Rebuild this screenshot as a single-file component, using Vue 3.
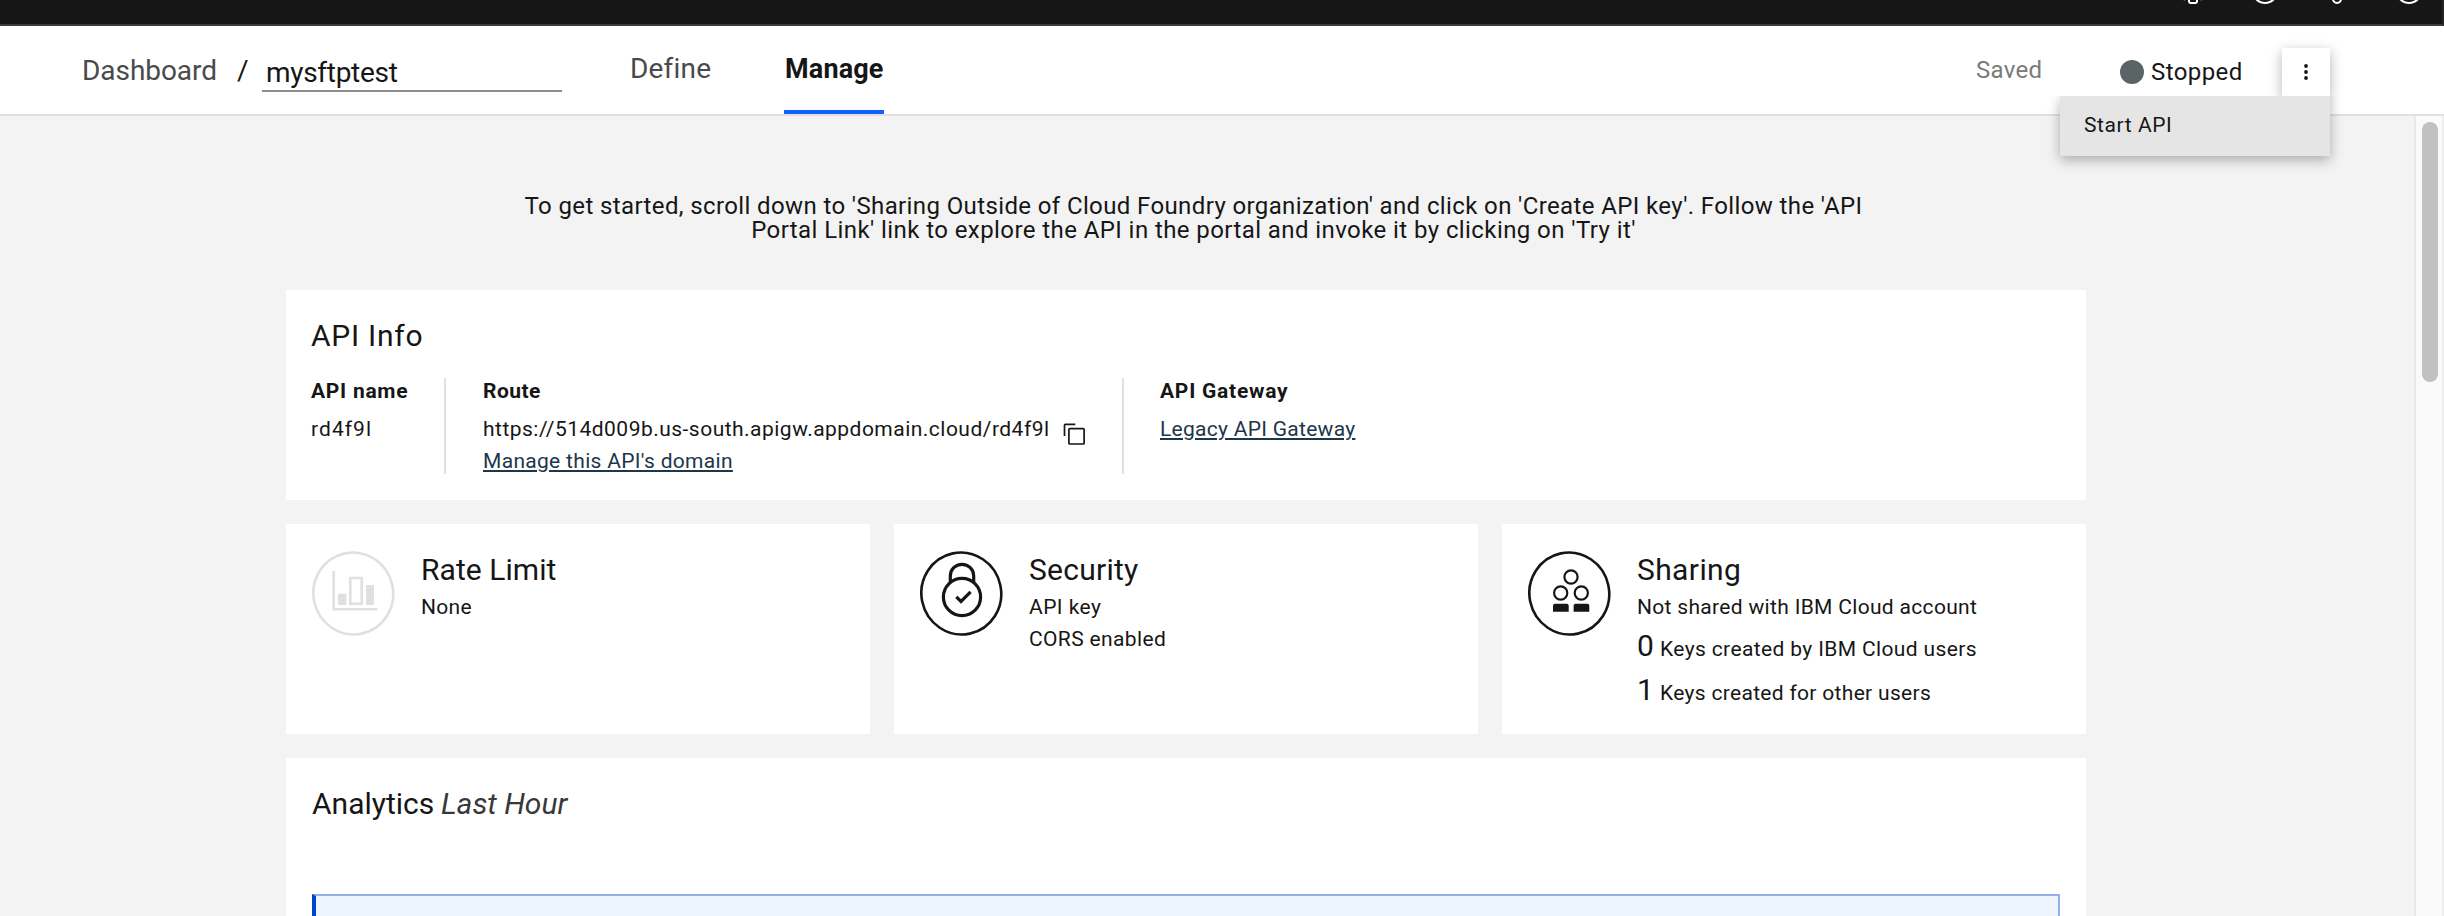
<script setup>
const statusLabel = 'Stopped'
const apiName = 'mysftptest'
const routeUrl = 'https://514d009b.us-south.apigw.appdomain.cloud/rd4f9l'
</script>

<template>
  <div class="page">
    <div class="topbar">
      <svg class="topbar-icons" width="240" height="6" viewBox="0 0 240 6">
        <path d="M9 -2V1.6Q9 3 10.4 3H15.6Q17 3 17 1.6V-2" />
        <path class="faint" d="M3.6 0.3H5.4M20.6 0.3H22.4" />
        <circle cx="85" cy="-9" r="12" />
        <circle cx="157" cy="-1" r="4" />
        <circle cx="229" cy="-9" r="12" />
      </svg>
    </div>

    <header class="header">
      <a class="crumb">Dashboard</a>
      <span class="slash">/</span>
      <div class="name-field">{{ apiName }}</div>
      <nav class="tabs">
        <a class="tab define">Define</a>
        <a class="tab active">Manage</a>
      </nav>
      <span class="saved">Saved</span>
      <div class="status"><i class="dot"></i><span>{{ statusLabel }}</span></div>
      <div class="overflow">
        <button class="overflow-btn" aria-label="Actions">
          <svg width="6" height="18" viewBox="0 0 6 18">
            <circle cx="3" cy="3" r="1.9" /><circle cx="3" cy="9" r="1.9" /><circle cx="3" cy="15" r="1.9" />
          </svg>
        </button>
        <div class="menu">Start API</div>
      </div>
    </header>

    <div class="body">
      <main class="content">
        <p class="intro">
          <span class="intro-a">To get started, scroll down to 'Sharing Outside of Cloud Foundry organization' and click on 'Create API key'. Follow the 'API</span>
          <span class="intro-b">Portal Link' link to explore the API in the portal and invoke it by clicking on 'Try it'</span>
        </p>

        <section class="card info">
          <h2 class="t-info">API Info</h2>
          <div class="cols">
            <div class="col c1">
              <h3 class="t-name">API name</h3>
              <div class="line t-id">rd4f9l</div>
            </div>
            <div class="col c2">
              <h3 class="t-route">Route</h3>
              <div class="line url-row">
                <span class="t-url">{{ routeUrl }}</span>
                <svg class="copy" width="24" height="24" viewBox="0 0 24 24">
                  <path d="M2.5 14V3.2Q2.5 2.4 3.3 2.4H13.3" />
                  <rect x="6.9" y="6.6" width="15.2" height="15.4" rx="0.8" />
                </svg>
              </div>
              <div class="line"><a class="link t-domain">Manage this API's domain</a></div>
            </div>
            <div class="col c3">
              <h3 class="t-gw">API Gateway</h3>
              <div class="line"><a class="link t-legacy">Legacy API Gateway</a></div>
            </div>
          </div>
        </section>

        <div class="features">
          <section class="card feature">
            <svg class="glyph muted" width="84" height="86" viewBox="0 0 84 86">
              <ellipse cx="41.3" cy="42.5" rx="39.9" ry="41" transform="rotate(-12 41.3 42.5)" />
              <path d="M21.7 20V58.3H65.3" />
              <rect class="solid" x="26" y="42.7" width="8.3" height="11.3" />
              <rect x="38.3" y="27" width="11.4" height="25.7" />
              <rect class="solid" x="54" y="34" width="8" height="20" />
            </svg>
            <div>
              <h2 class="t-rate">Rate Limit</h2>
              <div class="line t-none">None</div>
            </div>
          </section>

          <section class="card feature">
            <svg class="glyph" width="84" height="86" viewBox="0 0 84 86">
              <ellipse cx="41.3" cy="42.5" rx="39.9" ry="41" transform="rotate(-12 41.3 42.5)" />
              <circle class="heavy" cx="42" cy="46" r="18.6" />
              <path class="heavy" d="M30.3 32V25A11.7 11.7 0 0 1 53.7 25V32" />
              <path class="heavy" d="M36.3 45.8L41 50.4L50.6 40.8" />
            </svg>
            <div>
              <h2 class="t-sec">Security</h2>
              <div class="line t-key">API key</div>
              <div class="line t-cors">CORS enabled</div>
            </div>
          </section>

          <section class="card feature">
            <svg class="glyph" width="84" height="86" viewBox="0 0 84 86">
              <ellipse cx="41.3" cy="42.5" rx="39.9" ry="41" transform="rotate(-12 41.3 42.5)" />
              <g class="heads">
                <circle cx="43" cy="26" r="6.6" />
                <circle cx="32.7" cy="42" r="6.6" />
                <circle cx="53.3" cy="42" r="6.6" />
              </g>
              <path class="solid" d="M25 60.7V54.7Q25 52.7 27 52.7H38.7Q40.7 52.7 40.7 54.7V60.7Z" />
              <path class="solid" d="M45.6 60.7V54.7Q45.6 52.7 47.6 52.7H59.3Q61.3 52.7 61.3 54.7V60.7Z" />
            </svg>
            <div>
              <h2 class="t-share">Sharing</h2>
              <div class="line t-not">Not shared with IBM Cloud account</div>
              <div class="count first"><b>0</b><span class="t-by">Keys created by IBM Cloud users</span></div>
              <div class="count"><b>1</b><span class="t-for">Keys created for other users</span></div>
            </div>
          </section>
        </div>

        <section class="card analytics">
          <h2><span class="t-an">Analytics</span><em>Last Hour</em></h2>
          <div class="notice"></div>
        </section>
      </main>

      <div class="scrollbar"><div class="thumb"></div></div>
    </div>
  </div>
</template>

<style>
body { margin: 0; overflow: hidden; }
</style>

<style scoped>
.page {
  width: 2444px;
  height: 916px;
  overflow: hidden;
  display: flex;
  flex-direction: column;
  background: #f3f3f3;
  color: #161616;
  font-family: Roboto, "Liberation Sans", sans-serif;
  font-size: 21px;
}
h2, h3, p { margin: 0; font-weight: 400; }
.topbar {
  flex: none;
  box-sizing: border-box;
  height: 26px;
  background: #161616;
  border-bottom: 2px solid #393939;
  border-right: 2px solid #262626;
  display: flex;
  justify-content: flex-end;
  padding-right: 22px;
}
.topbar-icons { display: block; fill: none; stroke: #fff; stroke-width: 2; }
.topbar-icons .faint { stroke: #5a5a5a; stroke-width: 1; }

.header {
  flex: none;
  box-sizing: border-box;
  height: 90px;
  background: #fff;
  border-bottom: 2px solid #e0e0e0;
  display: flex;
  align-items: flex-start;
  padding-left: 82px;
  white-space: nowrap;
  font-size: 28px;
  position: relative;
  z-index: 2;
}
.crumb { width: 155px; margin-top: 17px; line-height: 56px; color: #4a4a4a; letter-spacing: -0.05px; }
.slash { width: 25px; margin-top: 17px; line-height: 56px; }
.name-field {
  box-sizing: border-box;
  width: 300px;
  height: 38px;
  margin-top: 28px;
  padding-left: 4px;
  line-height: 37px;
  border-bottom: 2px solid #8d8d8d;
  letter-spacing: -0.3px;
}
.tabs { display: flex; margin-left: 68px; }
.tab {
  box-sizing: border-box;
  height: 88px;
  padding-top: 1px;
  line-height: 84px;
}
.define { width: 154px; color: #4a4a4a; letter-spacing: 0.2px; }
.active {
  width: 100px;
  padding-left: 1px;
  font-weight: 700;
  font-size: 27px;
  letter-spacing: 0.15px;
  border-bottom: 4px solid #0f62fe;
}
.saved { width: 144px; margin-left: auto; margin-top: 16px; line-height: 56px; font-size: 24px; color: #7a7a7a; letter-spacing: 0.29px; }
.status {
  width: 162px;
  height: 56px;
  margin-top: 18px;
  display: flex;
  align-items: center;
  gap: 7px;
  font-size: 24px;
  letter-spacing: 0.42px;
}
.dot { width: 24px; height: 24px; border-radius: 50%; background: #5a6464; }
.overflow { position: relative; margin: 22px 114px 0 0; }
.overflow-btn {
  width: 48px;
  height: 48px;
  border: 0;
  padding: 0;
  display: flex;
  align-items: center;
  justify-content: center;
  background: #fff;
  box-shadow: 0 4px 12px rgba(0, 0, 0, 0.3);
}
.overflow-btn svg { fill: #161616; }
.menu {
  position: absolute;
  top: 48px;
  right: 0;
  box-sizing: border-box;
  width: 270px;
  height: 60px;
  padding-left: 24px;
  line-height: 59px;
  font-size: 21px;
  letter-spacing: 0.57px;
  background: #e5e5e5;
  box-shadow: 0 4px 12px rgba(0, 0, 0, 0.3);
  clip-path: inset(0 -24px -24px -24px);
}

.body { flex: 1; min-height: 0; display: flex; justify-content: space-between; }
.content { width: 1800px; margin-left: 286px; }
.intro {
  padding: 78px 0 48px 15px;
  display: flex;
  flex-direction: column;
  align-items: center;
  font-size: 24px;
  line-height: 24px;
  white-space: nowrap;
}
.intro-a { letter-spacing: 0.382px; }
.intro-b { letter-spacing: 0.418px; }

.card { box-sizing: border-box; background: #fff; white-space: nowrap; }
h2 { font-size: 30px; line-height: 40px; }
h3 { font-weight: 700; font-size: 21px; line-height: 26px; margin-bottom: 9px; }
.line { line-height: 32px; }
.info { height: 210px; padding: 26px 26px 0 25px; }
.cols { display: flex; margin-top: 22px; }
.col { box-sizing: border-box; height: 96px; }
.c1 { width: 135px; border-right: 2px solid #e0e0e0; }
.c2 { width: 678px; padding-left: 37px; border-right: 2px solid #e0e0e0; }
.c3 { padding-left: 36px; }
.url-row { display: flex; height: 32px; }
.url-row .t-url { width: 579px; }
.copy { margin-top: 9px; fill: none; stroke: #161616; stroke-width: 1.7; }
.link {
  color: #1d3649;
  text-decoration: underline;
  text-decoration-thickness: 2px;
  text-underline-offset: 2px;
}

.features { display: grid; grid-template-columns: repeat(3, 584px); gap: 24px; margin: 24px 0; }
.feature { height: 210px; padding: 26px 0 0 26px; display: flex; gap: 25px; }
.feature h2 { margin-bottom: 1px; }
.glyph { margin-top: 1px; flex: none; fill: none; stroke: #161616; stroke-width: 2.6; }
.glyph .heavy { stroke-width: 3.2; }
.glyph .heads { stroke-width: 2.2; }
.glyph .solid { fill: #161616; stroke: none; }
.glyph.muted { stroke: #e0e0e0; }
.glyph.muted .solid { fill: #e0e0e0; }
.count { display: flex; align-items: baseline; height: 44px; line-height: 44px; }
.count.first { margin-top: 1px; }
.count b { width: 23px; font-weight: 400; font-size: 30px; }

.t-info { letter-spacing: 0.75px; }
.t-name { letter-spacing: 0.72px; }
.t-id { letter-spacing: 1.06px; }
.t-route { letter-spacing: 0.46px; }
.t-url { letter-spacing: 0.48px; }
.t-domain { letter-spacing: 0.31px; }
.t-gw { letter-spacing: 0.75px; }
.t-legacy { letter-spacing: 0.28px; }
.t-rate { letter-spacing: 0.05px; }
.t-none { letter-spacing: 0.32px; }
.t-sec { letter-spacing: 0.25px; }
.t-key { letter-spacing: 0.45px; }
.t-cors { letter-spacing: 0.37px; }
.t-share { letter-spacing: 0.39px; }
.t-not { letter-spacing: 0.32px; }
.t-by { letter-spacing: 0.37px; }
.t-for { letter-spacing: 0.31px; }

.analytics { height: 240px; padding: 26px 26px 0; }
.analytics h2 { display: flex; }
.t-an { width: 129px; }
em { color: #393939; letter-spacing: -0.05px; }
.notice {
  box-sizing: border-box;
  height: 120px;
  margin-top: 70px;
  background: #edf5ff;
  border: 2px solid #94b0ea;
  border-left: 4px solid #0043ce;
}

.scrollbar {
  box-sizing: border-box;
  width: 30px;
  background: #fafafa;
  border-left: 2px solid #e8e8e8;
  border-right: 2px solid #ededed;
  padding: 6px 4px 0 6px;
}
.thumb { width: 16px; height: 260px; border-radius: 8px; background: #c1c1c1; }
</style>
